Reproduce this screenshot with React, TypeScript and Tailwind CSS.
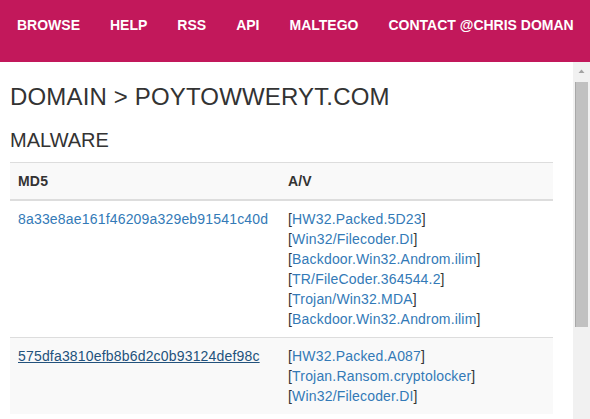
import React from "react";

const navItems = ["BROWSE", "HELP", "RSS", "API", "MALTEGO", "CONTACT @CHRIS DOMAN"];

type Row = { md5: string; av: string[]; active?: boolean };

const rows: Row[] = [
  {
    md5: "8a33e8ae161f46209a329eb91541c40d",
    av: [
      "HW32.Packed.5D23",
      "Win32/Filecoder.DI",
      "Backdoor.Win32.Androm.ilim",
      "TR/FileCoder.364544.2",
      "Trojan/Win32.MDA",
      "Backdoor.Win32.Androm.ilim",
    ],
  },
  {
    md5: "575dfa3810efb8b6d2c0b93124def98c",
    av: ["HW32.Packed.A087", "Trojan.Ransom.cryptolocker", "Win32/Filecoder.DI"],
    active: true,
  },
];

export default function App() {
  return (
    <div
      className="w-[590px] h-[419px] overflow-hidden bg-white text-[#333] flex flex-col"
      style={{ fontFamily: '"Liberation Sans", Arial, Helvetica, sans-serif' }}
    >
      <header className="h-[62px] shrink-0 bg-[#c2185b] flex pl-[2px]">
        {navItems.map((n) => (
          <a
            key={n}
            className="px-[15px] pt-[15px] text-[14px] leading-[20px] font-bold text-white whitespace-nowrap"
          >
            {n}
          </a>
        ))}
      </header>
      <div className="flex flex-1 min-h-0">
        <main className="flex-1 overflow-hidden px-[10px]">
          <h1 className="mt-[22px] text-[24px] leading-[26px] font-normal tracking-[0.16px]">DOMAIN &gt; POYTOWWERYT.COM</h1>
          <h2 className="mt-[19px] text-[20px] leading-[22px] font-normal">MALWARE</h2>
          <table className="mt-[11px] w-[543px] border-collapse text-[14px] leading-[20px] tracking-[0.18px]">
            <thead>
              <tr className="bg-[#f9f9f9]">
                <th className="w-[270px] text-left font-bold px-[8px] py-[8px] border-t border-[#ddd] border-b-2 border-b-[#ddd]">
                  MD5
                </th>
                <th className="text-left font-bold px-[8px] py-[8px] border-t border-[#ddd] border-b-2 border-b-[#ddd]">
                  A/V
                </th>
              </tr>
            </thead>
            <tbody>
              {rows.map((r, i) => (
                <tr key={i} className={i % 2 === 1 ? "bg-[#f9f9f9]" : "bg-white"}>
                  <td className={`align-top px-[8px] py-[8px] ${i > 0 ? "border-t border-[#ddd]" : ""}`}>
                    <a className={r.active ? "text-[#23527c] underline" : "text-[#337ab7]"}>{r.md5}</a>
                  </td>
                  <td className={`align-top px-[8px] py-[8px] ${i > 0 ? "border-t border-[#ddd]" : ""}`}>
                    {r.av.map((a, j) => (
                      <div key={j} className="whitespace-nowrap">
                        [<a className="text-[#337ab7]">{a}</a>]
                      </div>
                    ))}
                  </td>
                </tr>
              ))}
            </tbody>
          </table>
        </main>
        <div className="w-[17px] shrink-0 bg-[#f1f1f1] flex flex-col items-center">
          <svg width="17" height="17" viewBox="0 0 17 17" className="shrink-0">
            <polygon points="5.5,11 8.5,7.5 11.5,11" fill="#a3a3a3" />
          </svg>
          <div className="mt-[3px] w-[13px] h-[245px] bg-[#c1c1c1] border-l border-[#a8a8a8]" />
        </div>
      </div>
    </div>
  );
}
